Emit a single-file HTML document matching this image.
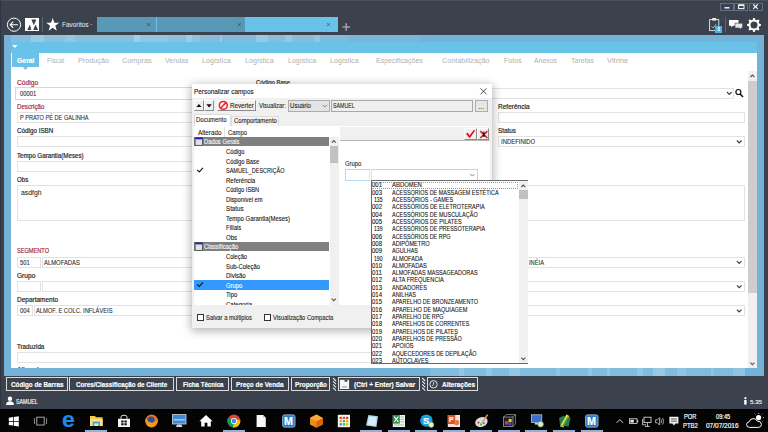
<!DOCTYPE html>
<html><head><meta charset="utf-8"><title>Personalizar campos</title>
<style>
*{box-sizing:border-box;margin:0;padding:0}
html,body{width:768px;height:432px;overflow:hidden;background:#3b424d;font-family:"Liberation Sans",sans-serif;}
.a{position:absolute}
.t{position:absolute;white-space:nowrap;line-height:10px;height:10px;transform-origin:0 50%;color:#222;-webkit-text-stroke:0.18px currentColor}
.tab{position:absolute;top:16.8px;height:15.6px;background:#5999b7}
.inp{position:absolute;border:1px solid #e2e2e2;background:#fff}
.bbtn{position:absolute;top:377.4px;height:13.6px;border:1px solid #dcdcdc}
svg{position:absolute;overflow:visible;left:0;top:0}
</style></head><body>
<div class="a" style="left:0px;top:0px;width:768px;height:36px;background:#3b424d;"></div>
<div class="a" style="left:0px;top:0px;width:768px;height:0.8px;background:#4b515b;"></div>
<div class="a" style="left:0px;top:0px;width:1px;height:409px;background:#2f353f;"></div>
<svg width="1" height="1"><circle cx="14" cy="24.7" r="6.6" fill="none" stroke="#fff" stroke-width="1"/><path d="M10.2,24.7 H18 M13.2,21.6 L10.2,24.7 L13.2,27.8" fill="none" stroke="#fff" stroke-width="1.1"/></svg>
<div class="a" style="left:25.2px;top:17.8px;width:13.6px;height:13.5px;background:#fff;"></div>
<svg width="1" height="1"><path d="M31.4,19.4 H36.4 L33.7,25.2 Z M29.9,24.6 L31.3,29.9 H27.3 Z M35.4,24.4 L38.2,29.9 H33.3 Z" fill="#3b424d"/></svg>
<div class="a" style="left:42px;top:17px;width:0.8px;height:14.5px;background:#5d646e;"></div>
<svg width="1" height="1"><path d="M52.7,18.1 L54.3,22.8 L59.2,22.8 L55.3,25.8 L56.8,30.7 L52.7,27.7 L48.6,30.7 L50.1,25.8 L46.2,22.8 L51.1,22.8 Z" fill="#fff"/></svg>
<div class="t" style="left:62px;top:19.90px;font-size:7px;color:#f0f0f0;-webkit-text-stroke:0;transform:scaleX(0.920)">Favoritos</div>
<svg width="1" height="1"><path d="M90.3,24.5 H92.3" stroke="#9aa0a8" stroke-width="0.7"/></svg>
<div class="tab" style="left:97px;width:59px"></div>
<div class="tab" style="left:156px;width:1px;background:#69c3e9"></div>
<div class="tab" style="left:157px;width:88px"></div>
<div class="tab" style="left:245px;width:92.5px;background:#69c3e9"></div>
<svg width="1" height="1"><path d="M147.0,23.0 L150.2,26.200000000000003 M150.2,23.0 L147.0,26.200000000000003" stroke="#2c4a5c" stroke-width="0.7"/></svg>
<svg width="1" height="1"><path d="M237.6,23.0 L240.79999999999998,26.200000000000003 M240.79999999999998,23.0 L237.6,26.200000000000003" stroke="#2c4a5c" stroke-width="0.7"/></svg>
<svg width="1" height="1"><path d="M326.79999999999995,23.0 L330.0,26.200000000000003 M330.0,23.0 L326.79999999999995,26.200000000000003" stroke="#2c5a74" stroke-width="0.7"/></svg>
<svg width="1" height="1"><path d="M342.4,27 H350 M346.2,23.2 V30.8" stroke="#9b9fa6" stroke-width="1.6"/></svg>
<div class="a" style="left:720.2px;top:2.6px;width:14px;height:8px;background:#3b424d;border:0.7px solid #5f6f86"></div>
<div class="a" style="left:734.4px;top:2.6px;width:14px;height:8px;background:#3b424d;border:0.7px solid #5f6f86"></div>
<div class="a" style="left:748.6px;top:2.6px;width:14px;height:8px;background:#3b424d;border:0.7px solid #5f6f86"></div>
<svg width="1" height="1"><path d="M724.5,7.8 H729.5" stroke="#fff" stroke-width="1.4"/><rect x="738.6" y="5" width="5.4" height="3.6" fill="none" stroke="#fff" stroke-width="1"/><path d="M738.6,5.2 H744" stroke="#fff" stroke-width="1.4"/><path d="M753.2,4.5 L757.8,8.8 M757.8,4.5 L753.2,8.8" stroke="#fff" stroke-width="1.1"/></svg>
<svg width="1" height="1"><rect x="709.6" y="19.6" width="9.2" height="11" fill="none" stroke="#e8e8e8" stroke-width="0.9"/><rect x="712.2" y="18" width="4" height="2.6" fill="#e8e8e8"/><path d="M711.6,26.4 L713.2,28 L716.2,24" fill="none" stroke="#c8ccd2" stroke-width="0.8"/></svg>
<div class="a" style="left:715.2px;top:26.4px;width:7px;height:6.4px;background:#49b3e6;"></div>
<div class="t" style="left:717.6px;top:25.20px;font-size:4.5px;color:#fff;font-weight:bold;transform:scaleX(1.000)">1</div>
<div class="a" style="left:725.2px;top:17px;width:0.8px;height:14.5px;background:#5d646e;"></div>
<svg width="1" height="1"><path d="M729,20 H738.5 V25.8 H733 L731.2,27.6 V25.8 H729 Z" fill="#fff"/><path d="M735,23.2 H742.6 V28 H741 V29.6 L739.2,28 H735 Z" fill="#e6e6e6" stroke="#3b424d" stroke-width="0.6"/></svg>
<svg width="1" height="1"><path d="M760.97,24.31 L760.97,25.69 L759.07,26.54 L758.67,27.50 L759.41,29.44 L758.44,30.41 L756.50,29.67 L755.54,30.07 L754.69,31.97 L753.31,31.97 L752.46,30.07 L751.50,29.67 L749.56,30.41 L748.59,29.44 L749.33,27.50 L748.93,26.54 L747.03,25.69 L747.03,24.31 L748.93,23.46 L749.33,22.50 L748.59,20.56 L749.56,19.59 L751.50,20.33 L752.46,19.93 L753.31,18.03 L754.69,18.03 L755.54,19.93 L756.50,20.33 L758.44,19.59 L759.41,20.56 L758.67,22.50 L759.07,23.46 Z" fill="#fff"/><circle cx="754" cy="25" r="3.5" fill="#3b424d"/></svg>
<div class="a" style="left:4px;top:34.6px;width:760px;height:341.4px;background:#74b3d7;"></div>
<div class="a" style="left:11px;top:34.6px;width:20px;height:7px;background:#86bddc;"></div>
<div class="a" style="left:31px;top:34.6px;width:13px;height:7px;background:#9dcae3;"></div>
<div class="a" style="left:44px;top:34.6px;width:21px;height:7px;background:#8ac0de;"></div>
<div class="a" style="left:65px;top:34.6px;width:10px;height:7px;background:#97c6e1;"></div>
<div class="a" style="left:75px;top:34.6px;width:59px;height:7px;background:#88bfdd;"></div>
<div class="a" style="left:134px;top:34.6px;width:6px;height:7px;background:#a5cde4;"></div>
<div class="a" style="left:140px;top:34.6px;width:28px;height:7px;background:#95c5e0;"></div>
<div class="a" style="left:168px;top:34.6px;width:18px;height:7px;background:#8cc0dd;"></div>
<div class="a" style="left:186px;top:34.6px;width:6px;height:7px;background:#a0cbe3;"></div>
<div class="a" style="left:192px;top:34.6px;width:8px;height:7px;background:#90c3df;"></div>
<div class="a" style="left:200px;top:34.6px;width:20px;height:7px;background:#86bcdb;"></div>
<div class="a" style="left:220px;top:34.6px;width:2px;height:7px;background:#9cc8e2;"></div>
<div class="a" style="left:222px;top:34.6px;width:34px;height:7px;background:#84bbdb;"></div>
<div class="a" style="left:256px;top:34.6px;width:12px;height:7px;background:#9ac8e2;"></div>
<div class="a" style="left:268px;top:34.6px;width:17px;height:7px;background:#88bedc;"></div>
<div class="a" style="left:285px;top:34.6px;width:7px;height:7px;background:#98c7e1;"></div>
<div class="a" style="left:292px;top:34.6px;width:22px;height:7px;background:#86bddb;"></div>
<div class="a" style="left:314px;top:34.6px;width:6px;height:7px;background:#94c4e0;"></div>
<div class="a" style="left:320px;top:34.6px;width:28px;height:7px;background:#80b9da;"></div>
<div class="a" style="left:348px;top:34.6px;width:72px;height:7px;background:#79b6d8;"></div>
<div class="a" style="left:11px;top:41.6px;width:746px;height:12px;background:#69c3e9;"></div>
<svg width="1" height="1"><path d="M12.2,45 H17.6 L14.9,48 Z" fill="#fff"/></svg>
<div class="a" style="left:11px;top:53.4px;width:746px;height:315px;background:#fff;"></div>
<div class="a" style="left:11.6px;top:53.4px;width:27.7px;height:13.4px;background:#69c3e9;"></div>
<svg width="1" height="1"><path d="M22.6,66.6 H28.4 L25.5,70 Z" fill="#69c3e9"/></svg>
<div class="t" style="left:17.2px;top:55.90px;font-size:7.6px;color:#fff;font-weight:bold;transform:scaleX(0.901)">Geral</div>
<div class="t" style="left:46.7px;top:56.00px;font-size:7.6px;color:#b0b0b0;-webkit-text-stroke:0;transform:scaleX(0.862)">Fiscal</div>
<div class="t" style="left:77.7px;top:56.00px;font-size:7.6px;color:#b0b0b0;-webkit-text-stroke:0;transform:scaleX(0.956)">Produção</div>
<div class="t" style="left:122px;top:56.00px;font-size:7.6px;color:#b0b0b0;-webkit-text-stroke:0;transform:scaleX(0.964)">Compras</div>
<div class="t" style="left:164.5px;top:56.00px;font-size:7.6px;color:#b0b0b0;-webkit-text-stroke:0;transform:scaleX(0.927)">Vendas</div>
<div class="t" style="left:201.7px;top:56.00px;font-size:7.6px;color:#b0b0b0;-webkit-text-stroke:0;transform:scaleX(0.947)">Logística</div>
<div class="t" style="left:244.5px;top:56.00px;font-size:7.6px;color:#b0b0b0;-webkit-text-stroke:0;transform:scaleX(0.944)">Logística</div>
<div class="t" style="left:287.5px;top:56.00px;font-size:7.6px;color:#b0b0b0;-webkit-text-stroke:0;transform:scaleX(0.927)">Logística</div>
<div class="t" style="left:330px;top:56.00px;font-size:7.6px;color:#b0b0b0;-webkit-text-stroke:0;transform:scaleX(0.944)">Logística</div>
<div class="t" style="left:376.2px;top:56.00px;font-size:7.6px;color:#b0b0b0;-webkit-text-stroke:0;transform:scaleX(0.924)">Especificações</div>
<div class="t" style="left:442.2px;top:56.00px;font-size:7.6px;color:#b0b0b0;-webkit-text-stroke:0;transform:scaleX(0.956)">Contabilização</div>
<div class="t" style="left:504.3px;top:56.00px;font-size:7.6px;color:#b0b0b0;-webkit-text-stroke:0;transform:scaleX(0.937)">Fotos</div>
<div class="t" style="left:534.4px;top:56.00px;font-size:7.6px;color:#b0b0b0;-webkit-text-stroke:0;transform:scaleX(0.908)">Anexos</div>
<div class="t" style="left:570.8px;top:56.00px;font-size:7.6px;color:#b0b0b0;-webkit-text-stroke:0;transform:scaleX(0.923)">Tarefas</div>
<div class="t" style="left:607px;top:56.00px;font-size:7.6px;color:#b0b0b0;-webkit-text-stroke:0;transform:scaleX(0.996)">Vitrine</div>
<div class="a" id="form" style="left:0;top:53.4px;width:757px;height:315px;overflow:hidden"><div class="a" style="left:0;top:-53.4px;width:757px;height:432px">
<div class="t" style="left:16.7px;top:77.60px;font-size:6.75px;color:#a52a33;transform:scaleX(0.996)">Código</div>
<div class="t" style="left:256px;top:77.60px;font-size:6.75px;color:#222;transform:scaleX(0.880)">Código Base</div>
<div class="t" style="left:16.7px;top:102.00px;font-size:6.75px;color:#a52a33;transform:scaleX(0.910)">Descrição</div>
<div class="t" style="left:16.7px;top:126.20px;font-size:6.75px;color:#222;transform:scaleX(0.930)">Código ISBN</div>
<div class="t" style="left:16.7px;top:150.50px;font-size:6.75px;color:#222;transform:scaleX(0.920)">Tempo Garantia(Meses)</div>
<div class="t" style="left:16.7px;top:174.80px;font-size:6.75px;color:#222;transform:scaleX(0.912)">Obs</div>
<div class="t" style="left:498px;top:102.00px;font-size:6.75px;color:#222;transform:scaleX(0.965)">Referência</div>
<div class="t" style="left:498px;top:126.20px;font-size:6.75px;color:#222;transform:scaleX(0.940)">Status</div>
<div class="inp" style="left:15.4px;top:86.9px;width:236px;height:13.2px;border:1.1px solid #b9e0f6"></div>
<div class="inp" style="left:256px;top:87.8px;width:478px;height:11.2px;"></div>
<svg width="1" height="1"><path d="M727.0,92.0 L729.3,94.4 L731.5999999999999,92.0" fill="none" stroke="#3a3a3a" stroke-width="1.1"/></svg>
<svg width="1" height="1"><circle cx="738.4" cy="92" r="2.5" fill="none" stroke="#111" stroke-width="1.2"/><path d="M740.2,94 L743,97" stroke="#111" stroke-width="1.6"/></svg>
<div class="inp" style="left:17px;top:112px;width:473px;height:11.2px;"></div>
<div class="inp" style="left:498px;top:112px;width:246.5px;height:11.2px;"></div>
<div class="inp" style="left:17px;top:136.3px;width:473px;height:11.2px;"></div>
<div class="inp" style="left:498px;top:136.3px;width:246.5px;height:11.2px;"></div>
<svg width="1" height="1"><path d="M736.9000000000001,140.5 L739.2,142.89999999999998 L741.5,140.5" fill="none" stroke="#3a3a3a" stroke-width="1.1"/></svg>
<div class="inp" style="left:17px;top:160.6px;width:473px;height:11.2px;"></div>
<div class="inp" style="left:17px;top:184.9px;width:727.5px;height:36.2px;"></div>
<div class="t" style="left:19.8px;top:89.40px;font-size:6.3px;color:#222;-webkit-text-stroke:0.08px currentColor;color:#2c2c2c;transform:scaleX(0.925)">00001</div>
<div class="t" style="left:19.8px;top:113.10px;font-size:6.3px;color:#222;-webkit-text-stroke:0.08px currentColor;color:#2c2c2c;transform:scaleX(0.890)">P PRATO PÉ DE GALINHA</div>
<div class="t" style="left:500.8px;top:137.40px;font-size:6.3px;color:#222;-webkit-text-stroke:0.08px currentColor;color:#2c2c2c;transform:scaleX(0.940)">INDEFINIDO</div>
<div class="t" style="left:20.5px;top:187.80px;font-size:6.3px;color:#222;-webkit-text-stroke:0.08px currentColor;color:#2c2c2c;transform:scaleX(1.084)">asdfgh</div>
<div class="t" style="left:16.7px;top:246.40px;font-size:6.75px;color:#a52a33;transform:scaleX(0.833)">SEGMENTO</div>
<div class="t" style="left:16.7px;top:270.80px;font-size:6.75px;color:#222;transform:scaleX(0.975)">Grupo</div>
<div class="t" style="left:16.7px;top:294.90px;font-size:6.75px;color:#222;transform:scaleX(0.961)">Departamento</div>
<div class="inp" style="left:17px;top:256.9px;width:23.7px;height:10.9px;"></div>
<div class="inp" style="left:42.2px;top:256.9px;width:332.8px;height:10.9px;"></div>
<div class="inp" style="left:381px;top:256.9px;width:363.5px;height:10.9px;"></div>
<svg width="1" height="1"><path d="M736.9000000000001,261.09999999999997 L739.2,263.49999999999994 L741.5,261.09999999999997" fill="none" stroke="#3a3a3a" stroke-width="1.1"/></svg>
<div class="t" style="left:19.7px;top:257.90px;font-size:6.3px;color:#222;-webkit-text-stroke:0.08px currentColor;color:#2c2c2c;transform:scaleX(0.913)">501</div>
<div class="t" style="left:43.800000000000004px;top:257.90px;font-size:6.3px;color:#222;-webkit-text-stroke:0.08px currentColor;color:#2c2c2c;transform:scaleX(0.932)">ALMOFADAS</div>
<div class="inp" style="left:17px;top:281.15px;width:23.7px;height:10.9px;"></div>
<div class="inp" style="left:42.2px;top:281.15px;width:332.8px;height:10.9px;"></div>
<div class="inp" style="left:381px;top:281.15px;width:363.5px;height:10.9px;"></div>
<svg width="1" height="1"><path d="M736.9000000000001,285.34999999999997 L739.2,287.74999999999994 L741.5,285.34999999999997" fill="none" stroke="#3a3a3a" stroke-width="1.1"/></svg>
<div class="inp" style="left:17px;top:305.4px;width:15.9px;height:10.9px;"></div>
<div class="inp" style="left:34.400000000000006px;top:305.4px;width:340.6px;height:10.9px;"></div>
<div class="inp" style="left:381px;top:305.4px;width:363.5px;height:10.9px;"></div>
<svg width="1" height="1"><path d="M736.9000000000001,309.59999999999997 L739.2,311.99999999999994 L741.5,309.59999999999997" fill="none" stroke="#3a3a3a" stroke-width="1.1"/></svg>
<div class="t" style="left:19.7px;top:306.40px;font-size:6.3px;color:#222;-webkit-text-stroke:0.08px currentColor;color:#2c2c2c;transform:scaleX(0.913)">004</div>
<div class="t" style="left:36.00000000000001px;top:306.40px;font-size:6.3px;color:#222;-webkit-text-stroke:0.08px currentColor;color:#2c2c2c;transform:scaleX(0.915)">ALMOF. E COLC. INFLÁVEIS</div>
<div class="t" style="left:529px;top:258.20px;font-size:6.3px;color:#222;-webkit-text-stroke:0.08px currentColor;color:#2c2c2c;transform:scaleX(0.912)">INÉIA</div>
<div class="t" style="left:16.7px;top:341.80px;font-size:6.75px;color:#222;transform:scaleX(0.917)">Traduzida</div>
<div class="inp" style="left:17px;top:352.2px;width:358px;height:10.5px;"></div>
<div class="t" style="left:16.7px;top:364.90px;font-size:6.75px;color:#222;transform:scaleX(1.006)">Alterada</div>
<div class="a" style="left:747.8px;top:71px;width:9.2px;height:297.4px;background:#f0f0f0;"></div>
<div class="a" style="left:747.8px;top:81px;width:9.2px;height:212px;background:#cdcdcd;"></div>
<svg width="1" height="1"><path d="M750.4,77.0 L752.4,75.0 L754.4,77.0" fill="none" stroke="#555" stroke-width="1.1"/></svg>
<svg width="1" height="1"><path d="M750.4,362.6 L752.4,364.6 L754.4,362.6" fill="none" stroke="#555" stroke-width="1.1"/></svg>
</div></div>
<div class="a" style="left:192px;top:84px;width:300px;height:243.6px;background:#f0f0f0;box-shadow:0 2px 9px 1px rgba(0,0,0,0.30);"></div>
<div class="a" style="left:192px;top:84px;width:300px;height:13.7px;background:#fff;"></div>
<div class="t" style="left:194.4px;top:86.60px;font-size:6.75px;color:#111;-webkit-text-stroke:0.09px currentColor;transform:scaleX(0.946)">Personalizar campos</div>
<svg width="1" height="1"><path d="M480.5,88.3 L486.5,94.3 M486.5,88.3 L480.5,94.3" stroke="#222" stroke-width="0.8"/></svg>
<div class="a" style="left:194px;top:99.8px;width:9.8px;height:11.7px;background:#f0f0f0;border-top:0.7px solid #fff;border-left:0.7px solid #fff;border-right:0.9px solid #8c8c8c;border-bottom:0.9px solid #8c8c8c;"></div>
<div class="a" style="left:203.8px;top:99.8px;width:10.4px;height:11.7px;background:#f0f0f0;border-top:0.7px solid #fff;border-left:0.7px solid #fff;border-right:0.9px solid #8c8c8c;border-bottom:0.9px solid #8c8c8c;"></div>
<svg width="1" height="1"><path d="M196.3,107 H201.5 L198.9,104 Z M206.4,104.2 H211.8 L209.1,107.4 Z" fill="#111"/></svg>
<div class="a" style="left:217.2px;top:99.8px;width:38.8px;height:11.7px;background:#f0f0f0;border-top:0.7px solid #fff;border-left:0.7px solid #fff;border-right:0.9px solid #8c8c8c;border-bottom:0.9px solid #8c8c8c;"></div>
<svg width="1" height="1"><circle cx="223.3" cy="105.4" r="3.9" fill="#fff" stroke="#ea1c24" stroke-width="1.5"/><path d="M220.6,108.2 L226,102.6" stroke="#ea1c24" stroke-width="1.5"/></svg>
<div class="t" style="left:229.6px;top:101.40px;font-size:6.6px;color:#222;-webkit-text-stroke:0.09px currentColor;transform:scaleX(0.945)">Reverter</div>
<div class="t" style="left:259.2px;top:101.40px;font-size:6.6px;color:#222;-webkit-text-stroke:0.09px currentColor;transform:scaleX(0.885)">Visualizar:</div>
<div class="a" style="left:288px;top:100px;width:42px;height:11.6px;background:#e4e4e4;border:0.6px solid #adadad"></div>
<div class="t" style="left:290px;top:101.40px;font-size:6.6px;color:#222;-webkit-text-stroke:0.09px currentColor;transform:scaleX(0.924)">Usuário</div>
<svg width="1" height="1"><path d="M322.6,104.9 L324.8,107.1 L327.0,104.9" fill="none" stroke="#666" stroke-width="0.8"/></svg>
<div class="a" style="left:331.3px;top:100px;width:142px;height:11.6px;background:#efefef;border:0.8px solid #a8a8a8"></div>
<div class="t" style="left:333.3px;top:101.20px;font-size:6.6px;color:#222;-webkit-text-stroke:0.09px currentColor;transform:scaleX(0.800)">SAMUEL</div>
<div class="a" style="left:475.4px;top:100px;width:12.6px;height:11.6px;background:#e6e6e6;border:0.6px solid #adadad"></div>
<div class="t" style="left:478.5px;top:102.20px;font-size:6.6px;color:#222;-webkit-text-stroke:0.09px currentColor;transform:scaleX(1.000)">...</div>
<div class="a" style="left:230.6px;top:116px;width:48.8px;height:10.4px;background:#f4f4f4;border:0.6px solid #dcdcdc;border-bottom:none"></div>
<div class="a" style="left:193.6px;top:113.8px;width:37px;height:12.6px;background:#fff;border:0.6px solid #dcdcdc;border-bottom:none"></div>
<div class="t" style="left:196.4px;top:115.20px;font-size:6.6px;color:#222;-webkit-text-stroke:0.09px currentColor;transform:scaleX(0.907)">Documento</div>
<div class="t" style="left:233.6px;top:116.40px;font-size:6.6px;color:#222;-webkit-text-stroke:0.09px currentColor;transform:scaleX(0.907)">Comportamento</div>
<div class="a" style="left:194px;top:126.4px;width:145px;height:178.8px;background:#fff;"></div>
<div class="t" style="left:197.5px;top:127.60px;font-size:6.6px;color:#222;-webkit-text-stroke:0.09px currentColor;transform:scaleX(0.957)">Alterado</div>
<div class="a" style="left:224.4px;top:127px;width:0.6px;height:9.6px;background:#e2e2e2;"></div>
<div class="t" style="left:227.6px;top:127.60px;font-size:6.6px;color:#222;-webkit-text-stroke:0.09px currentColor;transform:scaleX(0.889)">Campo</div>
<div class="a" style="left:194px;top:137px;width:145px;height:168.2px;overflow:hidden"><div class="a" style="left:-194px;top:-137px;width:400px;height:400px">
<div class="a" style="left:194.4px;top:137.0px;width:134.2px;height:8.9px;background:#7f7f7f;"></div>
<svg width="1" height="1"><rect x="195.1" y="137.4" width="7.4" height="7.9" fill="#d4d4d4" stroke="#3c3c3c" stroke-width="0.7"/><rect x="195.4" y="137.70000000000002" width="6.8" height="1.6" fill="#1c1cd8"/><path d="M195.9,140.70000000000002 H201.7 M195.9,142.4 H201.7 M195.9,144.0 H201.7" stroke="#f4f4f4" stroke-width="0.7"/></svg>
<div class="t" style="left:204.3px;top:137.40px;font-size:6.6px;color:#fff;-webkit-text-stroke:0.09px currentColor;transform:scaleX(0.880)">Dados Gerais</div>
<div class="t" style="left:225.7px;top:146.95px;font-size:6.6px;color:#111;-webkit-text-stroke:0.09px currentColor;transform:scaleX(0.885)">Código</div>
<div class="t" style="left:225.7px;top:156.50px;font-size:6.6px;color:#111;-webkit-text-stroke:0.09px currentColor;transform:scaleX(0.879)">Código Base</div>
<div class="t" style="left:225.7px;top:166.05px;font-size:6.6px;color:#111;-webkit-text-stroke:0.09px currentColor;transform:scaleX(0.836)">SAMUEL_DESCRIÇÃO</div>
<svg width="1" height="1"><path d="M197.2,169.85000000000002 L199.2,171.85000000000002 L203.0,167.85000000000002" fill="none" stroke="#111" stroke-width="1.1"/></svg>
<div class="t" style="left:225.7px;top:175.60px;font-size:6.6px;color:#111;-webkit-text-stroke:0.09px currentColor;transform:scaleX(0.916)">Referência</div>
<div class="t" style="left:225.7px;top:185.15px;font-size:6.6px;color:#111;-webkit-text-stroke:0.09px currentColor;transform:scaleX(0.871)">Código ISBN</div>
<div class="t" style="left:225.7px;top:194.70px;font-size:6.6px;color:#111;-webkit-text-stroke:0.09px currentColor;transform:scaleX(0.876)">Disponível em</div>
<div class="t" style="left:225.7px;top:204.25px;font-size:6.6px;color:#111;-webkit-text-stroke:0.09px currentColor;transform:scaleX(0.941)">Status</div>
<div class="t" style="left:225.7px;top:213.80px;font-size:6.6px;color:#111;-webkit-text-stroke:0.09px currentColor;transform:scaleX(0.905)">Tempo Garantia(Meses)</div>
<div class="t" style="left:225.7px;top:223.35px;font-size:6.6px;color:#111;-webkit-text-stroke:0.09px currentColor;transform:scaleX(0.908)">Filiais</div>
<div class="t" style="left:225.7px;top:232.90px;font-size:6.6px;color:#111;-webkit-text-stroke:0.09px currentColor;transform:scaleX(0.910)">Obs</div>
<div class="a" style="left:194.4px;top:242.05px;width:134.2px;height:8.9px;background:#7f7f7f;"></div>
<svg width="1" height="1"><rect x="195.1" y="242.45000000000002" width="7.4" height="7.9" fill="#d4d4d4" stroke="#3c3c3c" stroke-width="0.7"/><rect x="195.4" y="242.75000000000003" width="6.8" height="1.6" fill="#1c1cd8"/><path d="M195.9,245.75000000000003 H201.7 M195.9,247.45000000000002 H201.7 M195.9,249.05 H201.7" stroke="#f4f4f4" stroke-width="0.7"/></svg>
<div class="t" style="left:204.3px;top:242.45px;font-size:6.6px;color:#fff;-webkit-text-stroke:0.09px currentColor;transform:scaleX(0.880)">Classificação</div>
<div class="t" style="left:225.7px;top:252.00px;font-size:6.6px;color:#111;-webkit-text-stroke:0.09px currentColor;transform:scaleX(0.868)">Coleção</div>
<div class="t" style="left:225.7px;top:261.55px;font-size:6.6px;color:#111;-webkit-text-stroke:0.09px currentColor;transform:scaleX(0.892)">Sub-Coleção</div>
<div class="t" style="left:225.7px;top:271.10px;font-size:6.6px;color:#111;-webkit-text-stroke:0.09px currentColor;transform:scaleX(0.906)">Divisão</div>
<div class="a" style="left:194.4px;top:280.25px;width:134.2px;height:9.5px;background:#3399ff;"></div>
<div class="t" style="left:225.7px;top:280.65px;font-size:6.6px;color:#fff;-webkit-text-stroke:0.09px currentColor;transform:scaleX(0.895)">Grupo</div>
<svg width="1" height="1"><path d="M197.2,284.45000000000005 L199.2,286.45000000000005 L203.0,282.45000000000005" fill="none" stroke="#111" stroke-width="1.1"/></svg>
<div class="t" style="left:225.7px;top:290.20px;font-size:6.6px;color:#111;-webkit-text-stroke:0.09px currentColor;transform:scaleX(0.889)">Tipo</div>
<div class="t" style="left:225.7px;top:299.75px;font-size:6.6px;color:#111;-webkit-text-stroke:0.09px currentColor;transform:scaleX(0.909)">Categoria</div>
</div></div>
<div class="a" style="left:329.6px;top:137px;width:9.2px;height:168.2px;background:#f0f0f0;"></div>
<div class="a" style="left:329.6px;top:146.4px;width:8.4px;height:16.6px;background:#c1c1c1;"></div>
<svg width="1" height="1"><path d="M331.8,142.6 L333.8,140.6 L335.8,142.6" fill="none" stroke="#555" stroke-width="1.1"/></svg>
<svg width="1" height="1"><path d="M331.8,298.6 L333.8,300.6 L335.8,298.6" fill="none" stroke="#555" stroke-width="1.1"/></svg>
<div class="a" style="left:339px;top:126.4px;width:150.6px;height:178.8px;background:#fff;"></div>
<div class="a" style="left:339.8px;top:127.2px;width:149.8px;height:14.2px;background:#f0f0f0;border-bottom:1px solid #b4b4b4"></div>
<div class="a" style="left:464.2px;top:128px;width:12.4px;height:12.2px;background:#f0f0f0;border-top:0.7px solid #fff;border-left:0.7px solid #fff;border-right:0.9px solid #8c8c8c;border-bottom:0.9px solid #8c8c8c;"></div>
<div class="a" style="left:477px;top:128px;width:12.4px;height:12.2px;background:#f0f0f0;border-top:0.7px solid #fff;border-left:0.7px solid #fff;border-right:0.9px solid #8c8c8c;border-bottom:0.9px solid #8c8c8c;"></div>
<svg width="1" height="1"><path d="M466,133.8 L467.7,132.8 L469.5,135.6 L473.8,130 L475.2,130.4 L469.7,138.2 Z" fill="#e00c18"/></svg>
<svg width="1" height="1"><path d="M480.2,131.2 L487.4,138 M487.4,131.2 L480.2,138" stroke="#ee1c24" stroke-width="1.6"/><path d="M482.6,132.4 L485,136.8 M485,132.4 L482.6,136.8 M483.8,131.4 V137" stroke="#1a1a1a" stroke-width="0.9"/></svg>
<div class="t" style="left:345.2px;top:159.10px;font-size:6.6px;color:#222;-webkit-text-stroke:0.09px currentColor;transform:scaleX(0.889)">Grupo</div>
<div class="inp" style="left:345px;top:169px;width:25px;height:11.8px;border:1px solid #b2dbf3;border-right-color:#e0e0e0"></div>
<div class="inp" style="left:371px;top:169px;width:107.4px;height:11.8px;border:1px solid #b2dbf3;border-left-color:#e0e0e0"></div>
<svg width="1" height="1"><path d="M470.2,173.9 L472.4,176.1 L474.59999999999997,173.9" fill="none" stroke="#666" stroke-width="0.8"/></svg>
<div class="a" style="left:197px;top:314px;width:7.2px;height:7.2px;background:#fff;border:0.7px solid #333"></div>
<div class="t" style="left:206px;top:313.40px;font-size:6.6px;color:#222;-webkit-text-stroke:0.09px currentColor;transform:scaleX(0.884)">Salvar a múltiplos</div>
<div class="a" style="left:264.3px;top:314px;width:7.2px;height:7.2px;background:#fff;border:0.7px solid #333"></div>
<div class="t" style="left:273.3px;top:313.40px;font-size:6.6px;color:#222;-webkit-text-stroke:0.09px currentColor;transform:scaleX(0.876)">Visualização Compacta</div>
<div class="a" style="left:370.6px;top:180.4px;width:157.8px;height:183.4px;background:#fff;border:0.8px solid #6a6a6a"></div>
<div class="t" style="left:372.2px;top:180.30px;font-size:6.9px;color:#111;-webkit-text-stroke:0.09px currentColor;transform:scaleX(0.870)">001</div>
<div class="t" style="left:392.4px;top:180.30px;font-size:6.9px;color:#111;-webkit-text-stroke:0.09px currentColor;transform:scaleX(0.858)">ABDOMEN</div>
<div class="t" style="left:372.2px;top:187.62px;font-size:6.9px;color:#111;-webkit-text-stroke:0.09px currentColor;transform:scaleX(0.870)">003</div>
<div class="t" style="left:392.4px;top:187.62px;font-size:6.9px;color:#111;-webkit-text-stroke:0.09px currentColor;transform:scaleX(0.793)">ACESSORIOS DE MASSAGEM ESTÉTICA</div>
<div class="t" style="left:373.7px;top:194.94px;font-size:6.9px;color:#111;-webkit-text-stroke:0.09px currentColor;transform:scaleX(0.739)">135</div>
<div class="t" style="left:392.4px;top:194.94px;font-size:6.9px;color:#111;-webkit-text-stroke:0.09px currentColor;transform:scaleX(0.798)">ACESSÓRIOS - GAMES</div>
<div class="t" style="left:372.2px;top:202.26px;font-size:6.9px;color:#111;-webkit-text-stroke:0.09px currentColor;transform:scaleX(0.870)">002</div>
<div class="t" style="left:392.4px;top:202.26px;font-size:6.9px;color:#111;-webkit-text-stroke:0.09px currentColor;transform:scaleX(0.798)">ACESSÓRIOS DE ELETROTERAPIA</div>
<div class="t" style="left:372.2px;top:209.58px;font-size:6.9px;color:#111;-webkit-text-stroke:0.09px currentColor;transform:scaleX(0.870)">004</div>
<div class="t" style="left:392.4px;top:209.58px;font-size:6.9px;color:#111;-webkit-text-stroke:0.09px currentColor;transform:scaleX(0.796)">ACESSÓRIOS DE MUSCULAÇÃO</div>
<div class="t" style="left:372.2px;top:216.90px;font-size:6.9px;color:#111;-webkit-text-stroke:0.09px currentColor;transform:scaleX(0.870)">005</div>
<div class="t" style="left:392.4px;top:216.90px;font-size:6.9px;color:#111;-webkit-text-stroke:0.09px currentColor;transform:scaleX(0.802)">ACESSÓRIOS DE PILATES</div>
<div class="t" style="left:373.7px;top:224.22px;font-size:6.9px;color:#111;-webkit-text-stroke:0.09px currentColor;transform:scaleX(0.739)">139</div>
<div class="t" style="left:392.4px;top:224.22px;font-size:6.9px;color:#111;-webkit-text-stroke:0.09px currentColor;transform:scaleX(0.795)">ACESSÓRIOS DE PRESSOTERAPIA</div>
<div class="t" style="left:372.2px;top:231.54px;font-size:6.9px;color:#111;-webkit-text-stroke:0.09px currentColor;transform:scaleX(0.870)">006</div>
<div class="t" style="left:392.4px;top:231.54px;font-size:6.9px;color:#111;-webkit-text-stroke:0.09px currentColor;transform:scaleX(0.793)">ACESSÓRIOS DE RPG</div>
<div class="t" style="left:372.2px;top:238.86px;font-size:6.9px;color:#111;-webkit-text-stroke:0.09px currentColor;transform:scaleX(0.870)">008</div>
<div class="t" style="left:392.4px;top:238.86px;font-size:6.9px;color:#111;-webkit-text-stroke:0.09px currentColor;transform:scaleX(0.812)">ADIPÔMETRO</div>
<div class="t" style="left:372.2px;top:246.18px;font-size:6.9px;color:#111;-webkit-text-stroke:0.09px currentColor;transform:scaleX(0.870)">009</div>
<div class="t" style="left:392.4px;top:246.18px;font-size:6.9px;color:#111;-webkit-text-stroke:0.09px currentColor;transform:scaleX(0.786)">AGULHAS</div>
<div class="t" style="left:373.7px;top:253.50px;font-size:6.9px;color:#111;-webkit-text-stroke:0.09px currentColor;transform:scaleX(0.739)">190</div>
<div class="t" style="left:392.4px;top:253.50px;font-size:6.9px;color:#111;-webkit-text-stroke:0.09px currentColor;transform:scaleX(0.823)">ALMOFADA</div>
<div class="t" style="left:372.2px;top:260.82px;font-size:6.9px;color:#111;-webkit-text-stroke:0.09px currentColor;transform:scaleX(0.870)">010</div>
<div class="t" style="left:392.4px;top:260.82px;font-size:6.9px;color:#111;-webkit-text-stroke:0.09px currentColor;transform:scaleX(0.828)">ALMOFADAS</div>
<div class="t" style="left:372.2px;top:268.14px;font-size:6.9px;color:#111;-webkit-text-stroke:0.09px currentColor;transform:scaleX(0.909)">011</div>
<div class="t" style="left:392.4px;top:268.14px;font-size:6.9px;color:#111;-webkit-text-stroke:0.09px currentColor;transform:scaleX(0.798)">ALMOFADAS MASSAGEADORAS</div>
<div class="t" style="left:372.2px;top:275.46px;font-size:6.9px;color:#111;-webkit-text-stroke:0.09px currentColor;transform:scaleX(0.870)">012</div>
<div class="t" style="left:392.4px;top:275.46px;font-size:6.9px;color:#111;-webkit-text-stroke:0.09px currentColor;transform:scaleX(0.825)">ALTA FREQUENCIA</div>
<div class="t" style="left:372.2px;top:282.78px;font-size:6.9px;color:#111;-webkit-text-stroke:0.09px currentColor;transform:scaleX(0.870)">013</div>
<div class="t" style="left:392.4px;top:282.78px;font-size:6.9px;color:#111;-webkit-text-stroke:0.09px currentColor;transform:scaleX(0.799)">ANDADORES</div>
<div class="t" style="left:372.2px;top:290.10px;font-size:6.9px;color:#111;-webkit-text-stroke:0.09px currentColor;transform:scaleX(0.870)">014</div>
<div class="t" style="left:392.4px;top:290.10px;font-size:6.9px;color:#111;-webkit-text-stroke:0.09px currentColor;transform:scaleX(0.810)">ANILHAS</div>
<div class="t" style="left:372.2px;top:297.42px;font-size:6.9px;color:#111;-webkit-text-stroke:0.09px currentColor;transform:scaleX(0.870)">015</div>
<div class="t" style="left:392.4px;top:297.42px;font-size:6.9px;color:#111;-webkit-text-stroke:0.09px currentColor;transform:scaleX(0.792)">APARELHO DE BRONZEAMENTO</div>
<div class="t" style="left:372.2px;top:304.74px;font-size:6.9px;color:#111;-webkit-text-stroke:0.09px currentColor;transform:scaleX(0.870)">016</div>
<div class="t" style="left:392.4px;top:304.74px;font-size:6.9px;color:#111;-webkit-text-stroke:0.09px currentColor;transform:scaleX(0.807)">APARELHO DE MAQUIAGEM</div>
<div class="t" style="left:372.2px;top:312.06px;font-size:6.9px;color:#111;-webkit-text-stroke:0.09px currentColor;transform:scaleX(0.870)">017</div>
<div class="t" style="left:392.4px;top:312.06px;font-size:6.9px;color:#111;-webkit-text-stroke:0.09px currentColor;transform:scaleX(0.789)">APARELHO DE RPG</div>
<div class="t" style="left:372.2px;top:319.38px;font-size:6.9px;color:#111;-webkit-text-stroke:0.09px currentColor;transform:scaleX(0.870)">018</div>
<div class="t" style="left:392.4px;top:319.38px;font-size:6.9px;color:#111;-webkit-text-stroke:0.09px currentColor;transform:scaleX(0.787)">APARELHOS DE CORRENTES</div>
<div class="t" style="left:372.2px;top:326.70px;font-size:6.9px;color:#111;-webkit-text-stroke:0.09px currentColor;transform:scaleX(0.870)">019</div>
<div class="t" style="left:392.4px;top:326.70px;font-size:6.9px;color:#111;-webkit-text-stroke:0.09px currentColor;transform:scaleX(0.795)">APARELHOS DE PILATES</div>
<div class="t" style="left:372.2px;top:334.02px;font-size:6.9px;color:#111;-webkit-text-stroke:0.09px currentColor;transform:scaleX(0.870)">020</div>
<div class="t" style="left:392.4px;top:334.02px;font-size:6.9px;color:#111;-webkit-text-stroke:0.09px currentColor;transform:scaleX(0.788)">APARELHOS DE PRESSÃO</div>
<div class="t" style="left:372.2px;top:341.34px;font-size:6.9px;color:#111;-webkit-text-stroke:0.09px currentColor;transform:scaleX(0.870)">021</div>
<div class="t" style="left:392.4px;top:341.34px;font-size:6.9px;color:#111;-webkit-text-stroke:0.09px currentColor;transform:scaleX(0.817)">APOIOS</div>
<div class="t" style="left:372.2px;top:348.66px;font-size:6.9px;color:#111;-webkit-text-stroke:0.09px currentColor;transform:scaleX(0.870)">022</div>
<div class="t" style="left:392.4px;top:348.66px;font-size:6.9px;color:#111;-webkit-text-stroke:0.09px currentColor;transform:scaleX(0.795)">AQUECEDORES DE DEPILAÇÃO</div>
<div class="t" style="left:372.2px;top:355.98px;font-size:6.9px;color:#111;-webkit-text-stroke:0.09px currentColor;transform:scaleX(0.870)">023</div>
<div class="t" style="left:392.4px;top:355.98px;font-size:6.9px;color:#111;-webkit-text-stroke:0.09px currentColor;transform:scaleX(0.794)">AUTOCLAVES</div>
<div class="a" style="left:371.6px;top:181.6px;width:146.6px;height:7.6px;background:transparent;border:1px dotted #999"></div>
<div class="a" style="left:518.8px;top:181.2px;width:9px;height:181.4px;background:#f0f0f0;"></div>
<div class="a" style="left:518.8px;top:190.4px;width:9px;height:8.4px;background:#c1c1c1;"></div>
<svg width="1" height="1"><path d="M521.3,187.0 L523.3,185.0 L525.3,187.0" fill="none" stroke="#555" stroke-width="1.1"/></svg>
<svg width="1" height="1"><path d="M521.3,357.6 L523.3,359.6 L525.3,357.6" fill="none" stroke="#555" stroke-width="1.1"/></svg>
<div class="a" style="left:430px;top:368.4px;width:315px;height:7.6px;background:#82bcdc;"></div>
<div class="a" style="left:459px;top:368.4px;width:5px;height:7.6px;background:#93c6e1;"></div>
<div class="a" style="left:486px;top:368.4px;width:6px;height:7.6px;background:#93c6e1;"></div>
<div class="a" style="left:509px;top:368.4px;width:11px;height:7.6px;background:#93c6e1;"></div>
<div class="a" style="left:556px;top:368.4px;width:4px;height:7.6px;background:#90c4e0;"></div>
<div class="a" style="left:588px;top:368.4px;width:4px;height:7.6px;background:#93c6e1;"></div>
<div class="a" style="left:607px;top:368.4px;width:3px;height:7.6px;background:#93c6e1;"></div>
<div class="a" style="left:637px;top:368.4px;width:6px;height:7.6px;background:#93c6e1;"></div>
<div class="a" style="left:653px;top:368.4px;width:12px;height:7.6px;background:#98c9e3;"></div>
<div class="a" style="left:677px;top:368.4px;width:9px;height:7.6px;background:#90c4e0;"></div>
<div class="a" style="left:711px;top:368.4px;width:3px;height:7.6px;background:#90c4e0;"></div>
<div class="a" style="left:733px;top:368.4px;width:12px;height:7.6px;background:#8fc3e0;"></div>
<div class="a" style="left:0px;top:376px;width:768px;height:33.5px;background:#3b424d;"></div>
<div class="a" style="left:0px;top:376px;width:1px;height:33.5px;background:#2f353f;"></div>
<div class="bbtn" style="left:5.5px;width:62.0px"></div>
<div class="t" style="left:10.5px;top:380.00px;font-size:7.2px;color:#fff;font-weight:bold;transform:scaleX(0.876)">Código de Barras</div>
<div class="bbtn" style="left:69.3px;width:105.00000000000001px"></div>
<div class="t" style="left:75.8px;top:380.00px;font-size:7.2px;color:#fff;font-weight:bold;transform:scaleX(0.871)">Cores/Classificação de Cliente</div>
<div class="bbtn" style="left:176.3px;width:52.39999999999998px"></div>
<div class="t" style="left:182.5px;top:380.00px;font-size:7.2px;color:#fff;font-weight:bold;transform:scaleX(0.852)">Ficha Técnica</div>
<div class="bbtn" style="left:230.7px;width:58.0px"></div>
<div class="t" style="left:236.2px;top:380.00px;font-size:7.2px;color:#fff;font-weight:bold;transform:scaleX(0.887)">Preço de Venda</div>
<div class="bbtn" style="left:290.7px;width:39.30000000000001px"></div>
<div class="t" style="left:295px;top:380.00px;font-size:7.2px;color:#fff;font-weight:bold;transform:scaleX(0.890)">Proporção</div>
<svg width="1" height="1"><path d="M333,378.0 L336,381.0 M333,381.2 L336,384.2 M333,384.4 L336,387.4 M333,387.6 L336,390.6 " fill="none" stroke="#e8e8e8" stroke-width="1.1"/></svg>
<div class="bbtn" style="left:338px;width:81.69999999999999px"></div>
<svg width="1" height="1"><rect x="339.9" y="379.8" width="9.2" height="9.2" fill="#f6f6f6"/><rect x="344.6" y="379.8" width="2.8" height="1.9" fill="#3b424d"/><rect x="342" y="386.2" width="5.2" height="1.4" fill="#a4a8ae"/></svg>
<div class="t" style="left:353.5px;top:380.00px;font-size:7.2px;color:#fff;font-weight:bold;transform:scaleX(0.909)">(Ctrl + Enter) Salvar</div>
<svg width="1" height="1"><path d="M422.2,378.0 L425.2,381.0 M422.2,381.2 L425.2,384.2 M422.2,384.4 L425.2,387.4 M422.2,387.6 L425.2,390.6 " fill="none" stroke="#e8e8e8" stroke-width="1.1"/></svg>
<div class="bbtn" style="left:426.7px;width:51.80000000000001px"></div>
<svg width="1" height="1"><circle cx="433.5" cy="384.3" r="3.7" fill="none" stroke="#f2f2f2" stroke-width="0.9"/><path d="M433.6,382 V384.6 L432,385.8" fill="none" stroke="#f2f2f2" stroke-width="0.8"/></svg>
<div class="t" style="left:442.2px;top:380.00px;font-size:7.2px;color:#fff;font-weight:bold;transform:scaleX(0.898)">Alterações</div>
<svg width="1" height="1"><circle cx="10" cy="398.8" r="2.2" fill="#fff"/><path d="M6,405 Q6,401.4 10,401.2 Q14,401.4 14,405 Z" fill="#fff"/></svg>
<div class="t" style="left:16px;top:397.00px;font-size:6.3px;color:#f4f4f4;transform:scaleX(0.834)">SAMUEL</div>
<svg width="1" height="1"><circle cx="745.4" cy="398.2" r="1.1" fill="#fff"/><path d="M744.2,400 H746.6 V404.6 H744.2 Z" fill="#fff"/></svg>
<div class="t" style="left:749.6px;top:397.00px;font-size:6px;color:#e8e8e8;transform:scaleX(1.027)">5.35</div>
<div class="a" style="left:0px;top:409.4px;width:768px;height:22.6px;background:#040404;"></div>
<div class="a" style="left:85px;top:430.2px;width:22px;height:1.8px;background:#8fb2d6;"></div>
<div class="a" style="left:223px;top:430.2px;width:22px;height:1.8px;background:#8fb2d6;"></div>
<div class="a" style="left:360px;top:430.2px;width:22px;height:1.8px;background:#8fb2d6;"></div>
<div class="a" style="left:388px;top:430.2px;width:22px;height:1.8px;background:#8fb2d6;"></div>
<div class="a" style="left:415.2px;top:430.2px;width:22px;height:1.8px;background:#8fb2d6;"></div>
<div class="a" style="left:442.8px;top:430.2px;width:22px;height:1.8px;background:#8fb2d6;"></div>
<div class="a" style="left:470px;top:430.2px;width:22px;height:1.8px;background:#8fb2d6;"></div>
<div class="a" style="left:497.8px;top:430.2px;width:22px;height:1.8px;background:#8fb2d6;"></div>
<div class="a" style="left:525px;top:430.2px;width:22px;height:1.8px;background:#8fb2d6;"></div>
<div class="a" style="left:552.8px;top:430.2px;width:22px;height:1.8px;background:#8fb2d6;"></div>
<div class="a" style="left:581px;top:430.2px;width:22px;height:1.8px;background:#8fb2d6;"></div>
<svg width="1" height="1"><path d="M8.8,417.7 L13,417.1 V421 H8.8 Z M13.7,417 L18.8,416.3 V421 H13.7 Z M8.8,421.7 H13 V425.6 L8.8,425 Z M13.7,421.7 H18.8 V426.4 L13.7,425.7 Z" fill="#fff"/></svg>
<svg width="1" height="1"><rect x="36.8" y="417.2" width="7.4" height="7.8" fill="none" stroke="#b4b4b4" stroke-width="0.9"/><path d="M35.2,418.6 H34.4 V423.6 H35.2 M45.8,418.6 H46.6 V423.6 H45.8" fill="none" stroke="#b4b4b4" stroke-width="0.8"/></svg>
<div class="t" style="left:62.4px;top:415.00px;font-size:22px;color:#1f8ae6;font-weight:bold;font-family:'Liberation Sans',sans-serif;transform:scaleX(1.045)">e</div>
<svg width="1" height="1"><path d="M90,416 H95 L96,417.2 H102.6 V426 H90 Z" fill="#f5c84a"/><rect x="90" y="419.2" width="12.6" height="6.8" fill="#fbe28a"/><rect x="92.6" y="421.6" width="7.4" height="4.4" fill="#3fa0e0"/><rect x="94.2" y="423.4" width="4.2" height="2.6" fill="#fbe28a"/></svg>
<svg width="1" height="1"><path d="M118,418.8 H130 V427 H118 Z" fill="#f4f4f4"/><path d="M121,418.8 V417 Q121,415.2 124,415.2 Q127,415.2 127,417 V418.8" fill="none" stroke="#f4f4f4" stroke-width="0.9"/><path d="M121.2,420.6 H123.6 V422.6 H121.2 Z M124.4,420.6 H126.8 V422.6 H124.4 Z M121.2,423.3 H123.6 V425.3 H121.2 Z M124.4,423.3 H126.8 V425.3 H124.4 Z" fill="#111"/></svg>
<svg width="1" height="1"><circle cx="151.6" cy="421" r="6.4" fill="#e8731c"/><circle cx="151" cy="420" r="3.6" fill="#2c4f9e"/><path d="M146,418 Q148,423 153,422.6 Q156,422 157.4,419 Q158,425 152,427.2 Q146,427 145.4,421 Z" fill="#f29a1f"/></svg>
<svg width="1" height="1"><rect x="172.4" y="414.6" width="13.6" height="9.4" fill="#3c8ad6" stroke="#cfd8e4" stroke-width="0.8"/><rect x="173.6" y="419" width="11.2" height="1.6" fill="#9cc6ee"/><path d="M177,424.4 H181.4 L182.4,427 H176 Z" fill="#cfd8e4"/></svg>
<svg width="1" height="1"><path d="M199.4,421.2 L206,415 L212.6,421.2 H210.8 V426.4 H207.4 V422.8 H204.6 V426.4 H201.2 V421.2 Z" fill="#fff"/></svg>
<svg width="1" height="1"><circle cx="233.9" cy="421" r="6.5" fill="#db4437"/><path d="M233.9,421 L228.3,417.7 A6.5,6.5 0 0 0 233,427.4 Z" fill="#0f9d58"/><path d="M233.9,421 L233,427.4 A6.5,6.5 0 0 0 240.4,420.4 L236,419 Z" fill="#f4c20d"/><circle cx="233.9" cy="421" r="3" fill="#fff"/><circle cx="233.9" cy="421" r="2.3" fill="#4285f4"/></svg>
<svg width="1" height="1"><path d="M256.6,415 H263 L265.8,417.8 V427 H256.6 Z" fill="#f8f8f8"/><path d="M263,415 V417.8 H265.8 Z" fill="#c8c8c8"/></svg>
<svg width="1" height="1"><rect x="282.5" y="414.8" width="12.6" height="12.4" rx="2" fill="#2f7fc2" stroke="#9fc4e6" stroke-width="0.7"/></svg>
<div class="t" style="left:284.3px;top:417.00px;font-size:10px;color:#fff;font-weight:bold;transform:scaleX(1.079)">M</div>
<svg width="1" height="1"><path d="M316.4,414.6 L322.8,418 V424.4 L316.4,427.8 L310,424.4 V418 Z" fill="#f08a1c"/><path d="M316.4,421.2 L322.8,418 V424.4 L316.4,427.8 Z" fill="#d4660e"/><path d="M316.4,421.2 L310,418 L316.4,414.6 L322.8,418 Z" fill="#f9a83a"/></svg>
<svg width="1" height="1"><rect x="337.8" y="414.8" width="12.2" height="12.4" fill="#f4f4f4"/></svg>
<svg width="1" height="1"><rect x="339.6" y="416.8" width="2.3" height="2.3" fill="#e03c31"/></svg>
<svg width="1" height="1"><rect x="342.8" y="416.8" width="2.3" height="2.3" fill="#e03c31"/></svg>
<svg width="1" height="1"><rect x="346.0" y="416.8" width="2.3" height="2.3" fill="#e03c31"/></svg>
<svg width="1" height="1"><rect x="339.6" y="420.0" width="2.3" height="2.3" fill="#f4b400"/></svg>
<svg width="1" height="1"><rect x="342.8" y="420.0" width="2.3" height="2.3" fill="#3cba54"/></svg>
<svg width="1" height="1"><rect x="346.0" y="420.0" width="2.3" height="2.3" fill="#f4b400"/></svg>
<svg width="1" height="1"><rect x="339.6" y="423.2" width="2.3" height="2.3" fill="#4885ed"/></svg>
<svg width="1" height="1"><rect x="342.8" y="423.2" width="2.3" height="2.3" fill="#3cba54"/></svg>
<svg width="1" height="1"><rect x="346.0" y="423.2" width="2.3" height="2.3" fill="#f4b400"/></svg>
<svg width="1" height="1"><path d="M368.4,415 L378,416.2 L376.4,427 L366,425.6 Z" fill="#a9d4ea"/><path d="M369.2,416.6 L376.6,417.6 L375.4,425.4 L367.6,424.4 Z" fill="#d9eef8"/></svg>
<svg width="1" height="1"><rect x="392.8" y="415" width="12.2" height="12" fill="#eef4ee"/><rect x="392.8" y="415" width="7" height="8.6" fill="#2e8b4a"/><path d="M394.2,416.6 L398.4,422 M398.4,416.6 L394.2,422" stroke="#fff" stroke-width="1.2"/><path d="M400.6,417 H404 M400.6,419.4 H404 M400.6,421.8 H404 M394,425 H404" stroke="#7fb48c" stroke-width="0.8"/></svg>
<svg width="1" height="1"><circle cx="426.4" cy="420.6" r="6.2" fill="#12a5e6"/><circle cx="431.2" cy="424.8" r="2.6" fill="#e8f4e0" stroke="#7ab648" stroke-width="0.8"/></svg>
<div class="t" style="left:423.2px;top:416.40px;font-size:9px;color:#fff;font-weight:bold;transform:scaleX(1.064)">S</div>
<svg width="1" height="1"><rect x="447.8" y="415" width="12.2" height="12" fill="#f6e4dc"/><rect x="447.8" y="415" width="7.4" height="9" fill="#d9532c"/><circle cx="456.6" cy="422.6" r="2.6" fill="#e8763f"/></svg>
<div class="t" style="left:449.4px;top:415.20px;font-size:7.5px;color:#fff;font-weight:bold;transform:scaleX(0.917)">P</div>
<svg width="1" height="1"><ellipse cx="481.4" cy="422" rx="6.4" ry="4.8" fill="#d8dde6" transform="rotate(-20 481.4 422)"/><circle cx="478.4" cy="422.6" r="1.1" fill="#e03c31"/><circle cx="481" cy="424.4" r="1.1" fill="#3cba54"/><circle cx="483.8" cy="423.2" r="1.1" fill="#4885ed"/><path d="M482,423 L487.6,414.6" stroke="#e8a13a" stroke-width="1.5"/></svg>
<svg width="1" height="1"><rect x="503.6" y="417" width="9.4" height="9.6" fill="#1c1c24" stroke="#c8c8c8" stroke-width="0.6"/><path d="M503.6,417 L506.4,414.6 H515.4 V424 L513,426.6 M513,417 L515.4,414.6" fill="none" stroke="#c8c8c8" stroke-width="0.6"/><rect x="505" y="421" width="3.4" height="3.6" fill="#e03030"/><rect x="508.6" y="419" width="3" height="3.2" fill="#e8d020"/><rect x="508.4" y="422.6" width="3" height="2.8" fill="#3050d0"/></svg>
<svg width="1" height="1"><rect x="531.4" y="414.8" width="10.4" height="7.6" fill="#3a6fd0" stroke="#c8d4e8" stroke-width="0.7"/><rect x="534.8" y="423" width="4" height="1.6" fill="#c8d4e8"/><circle cx="540.6" cy="424.2" r="2.8" fill="#dfe8dc" stroke="#6aa84f" stroke-width="0.7"/></svg>
<svg width="1" height="1"><path d="M560,426.6 L566.4,414.6 L569.4,416 L563.4,427.4 Z" fill="#e8d020"/><path d="M559,418 Q564,414 570.6,417.6 L568.6,426.8 Q564,425 560.4,426.8 Z" fill="#2f8f5a" opacity="0.85"/><path d="M561.4,425.6 L567.4,415.2" stroke="#f0e040" stroke-width="1.6"/></svg>
<svg width="1" height="1"><rect x="585.5" y="414.8" width="12.6" height="12.4" rx="2" fill="#2f7fc2" stroke="#9fc4e6" stroke-width="0.7"/></svg>
<div class="t" style="left:587.3px;top:417.00px;font-size:10px;color:#fff;font-weight:bold;transform:scaleX(1.079)">M</div>
<svg width="1" height="1"><path d="M616.5999999999999,422.8 L619.8,419.59999999999997 L623.0,422.8" fill="none" stroke="#e8e8e8" stroke-width="0.9"/></svg>
<svg width="1" height="1"><rect x="629.4" y="418.8" width="7.6" height="4.8" fill="none" stroke="#e8e8e8" stroke-width="0.8"/><rect x="630.4" y="419.8" width="3.4" height="2.8" fill="#e8e8e8"/><rect x="637.2" y="420.2" width="1" height="2" fill="#e8e8e8"/></svg>
<svg width="1" height="1"><rect x="644" y="417.2" width="7" height="5.4" fill="none" stroke="#e8e8e8" stroke-width="0.8"/><path d="M642.6,419 V424.8 H646 M645,426.4 H649.6 M647.4,422.8 V426.4" fill="none" stroke="#e8e8e8" stroke-width="0.8"/></svg>
<svg width="1" height="1"><path d="M655.6,419.8 H657.4 L659.6,417.6 V425 L657.4,422.8 H655.6 Z" fill="none" stroke="#e8e8e8" stroke-width="0.7"/><path d="M661,419.4 Q662.2,421.3 661,423.2 M662.6,418 Q664.6,421.3 662.6,424.6" fill="none" stroke="#e8e8e8" stroke-width="0.7"/></svg>
<svg width="1" height="1"><path d="M669.4,416.8 H678.4 V423.6 H675.4 L673.9,425.4 L672.4,423.6 H669.4 Z" fill="#f0f0f0"/><path d="M671,419 H676.8 M671,421.2 H676.8" stroke="#111" stroke-width="0.7"/></svg>
<div class="t" style="left:684px;top:412.00px;font-size:6.8px;color:#fff;transform:scaleX(0.848)">POR</div>
<div class="t" style="left:683px;top:421.20px;font-size:6.8px;color:#fff;transform:scaleX(0.871)">PTB2</div>
<div class="t" style="left:715.5px;top:411.80px;font-size:6.8px;color:#fff;transform:scaleX(0.840)">09:45</div>
<div class="t" style="left:706px;top:421.20px;font-size:6.8px;color:#fff;transform:scaleX(0.955)">07/07/2016</div>
<svg width="1" height="1"><circle cx="758.6" cy="417.6" r="2.6" fill="#fff"/><path d="M758.6,413 V414 M763,417.6 H764 M761.8,414.4 L762.5,413.7 M755.4,414.4 L754.7,413.7 M761.8,420.8 L762.5,421.5" stroke="#fff" stroke-width="0.7"/><path d="M749.6,427.4 Q746.6,427.4 746.6,424.6 Q746.6,422.2 749.2,421.8 Q749.8,418.6 753.4,418.6 Q756.4,418.6 757.4,421.2 Q761.4,421 761.4,424.4 Q761.4,427.4 758.4,427.4 Z" fill="#040404" stroke="#fff" stroke-width="1"/></svg>
</body></html>
